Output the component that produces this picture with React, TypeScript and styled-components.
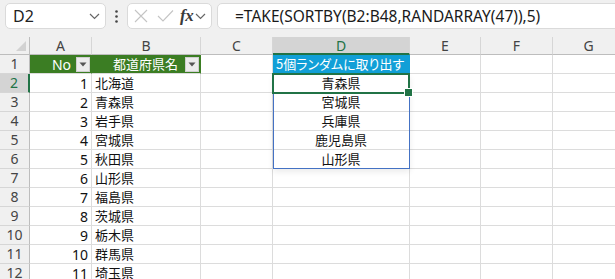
import React from 'react';
import styled, { createGlobalStyle, css } from 'styled-components';

const Global = createGlobalStyle`
  html, body { margin: 0; padding: 0; background: #ffffff; }
  body {
    width: 615px; height: 279px; overflow: hidden;
    font-family: "Segoe UI", "Noto Sans", "Noto Sans CJK JP", sans-serif;
  }
  * { box-sizing: border-box; }
`;

const GREEN = '#217346';
const GRID = '#dcdcdc';
const HEAD_BG = '#f0f0f0';
const HEAD_ACTIVE = '#d4d4d4';
const CJK = '"Noto Sans CJK JP", sans-serif';
const UI = '"Noto Sans", "Noto Sans CJK JP", sans-serif';

const Page = styled.div`
  width: 615px;
  height: 279px;
  overflow: hidden;
  display: flex;
  flex-direction: column;
  background: #fff;
`;

const Toolbar = styled.div`
  flex: none;
  height: 37px;
  background: ${HEAD_BG};
  display: flex;
  align-items: flex-start;
  padding: 3px 0 0 5px;
  overflow: hidden;
`;

const Box = styled.div<{ $w: number }>`
  flex: none;
  width: ${(p) => p.$w}px;
  height: 26px;
  background: #fff;
  border: 1px solid #dadada;
  border-radius: 5px;
  display: flex;
  align-items: center;
`;

const NameBox = styled(Box)`
  justify-content: space-between;
  padding: 0 5px 0 7px;
  font-family: ${UI};
  font-size: 16px;
  color: #222;
`;

const Dots = styled.div`
  flex: none;
  width: 21px;
  height: 26px;
  display: flex;
  align-items: center;
  justify-content: center;
`;

const FxBox = styled(Box)`
  padding: 0 2px 0 6px;
  gap: 0;
`;

const FxText = styled.span`
  font-family: "Liberation Serif", serif;
  font-style: italic;
  font-weight: bold;
  font-size: 17px;
  color: #3a3a3a;
  margin: 0 2px 0 6px;
  letter-spacing: -0.5px;
`;

const FormulaBox = styled(Box)`
  margin-left: 5px;
  padding-left: 17px;
  font-family: ${UI};
  font-size: 15.5px;
  color: #1a1a1a;
  white-space: nowrap;
`;

const Sheet = styled.div`
  display: grid;
  grid-template-columns: 30px 62px 109px 72px 137px 71px 72px 72px;
  grid-template-rows: 18px repeat(12, 19px);
  flex: none;
`;

type Pos = { $r: number; $c: number };

const Placed = styled.div<Pos>`
  grid-row: ${(p) => p.$r};
  grid-column: ${(p) => p.$c};
`;

const Corner = styled(Placed)`
  background: ${HEAD_BG};
  border-right: 1px solid #bdbdbd;
  border-bottom: 1px solid #bdbdbd;
  display: flex;
  align-items: flex-end;
  justify-content: flex-end;
  padding: 0 3px 3px 0;
`;

const ColHead = styled(Placed)<{ $active?: boolean }>`
  background: ${(p) => (p.$active ? HEAD_ACTIVE : HEAD_BG)};
  border-right: 1px solid #d6d6d6;
  border-bottom: ${(p) => (p.$active ? `2px solid ${GREEN}` : '1px solid #bdbdbd')};
  color: ${(p) => (p.$active ? GREEN : '#444')};
  font-family: ${UI};
  font-size: 14px;
  display: flex;
  align-items: center;
  justify-content: center;
  line-height: 1;
  padding-top: 1px;
`;

const RowHead = styled(Placed)<{ $active?: boolean }>`
  background: ${(p) => (p.$active ? HEAD_ACTIVE : HEAD_BG)};
  border-right: ${(p) => (p.$active ? `2px solid ${GREEN}` : '1px solid #bdbdbd')};
  border-bottom: 1px solid #d6d6d6;
  color: ${(p) => (p.$active ? GREEN : '#444')};
  font-family: ${UI};
  font-size: 14px;
  display: flex;
  align-items: center;
  justify-content: center;
  line-height: 1;
`;

type Variant = 'plain' | 'tableHead' | 'blueHead';

const Cell = styled(Placed)<{ $align?: 'left' | 'right' | 'center'; $variant?: Variant }>`
  border-right: 1px solid ${GRID};
  border-bottom: 1px solid ${GRID};
  font-family: ${UI};
  font-size: 14px;
  color: #111;
  display: flex;
  align-items: center;
  white-space: nowrap;
  overflow: hidden;
  line-height: 1;
  padding: 1px 3px 0 3px;
  justify-content: ${(p) =>
    p.$align === 'right' ? 'flex-end' : p.$align === 'center' ? 'center' : 'flex-start'};
  ${(p) =>
    p.$variant === 'tableHead' &&
    css`
      background: #3b7d23;
      border-right-color: #3b7d23;
      color: #fff;
      padding-right: 1px;
    `}
  ${(p) =>
    p.$variant === 'blueHead' &&
    css`
      background: #119fd7;
      border-right-color: #119fd7;
      color: #fff;
      font-feature-settings: "palt";
      padding-left: 3px;
    `}
`;

const Jp = styled.span`
  font-family: ${CJK};
  font-size: 13px;
  position: relative;
  top: -1px;
`;

const FilterBtn = styled.span<{ $gap?: number }>`
  flex: none;
  width: 14px;
  height: 15px;
  margin-left: ${(p) => p.$gap ?? 5}px;
  background: #ececec;
  border: 1px solid #cfcfcf;
  display: flex;
  align-items: center;
  justify-content: center;
`;

const Spill = styled(Placed)`
  grid-row: 3 / 8;
  border: 1px solid #4472c4;
  box-shadow: 0 3px 6px rgba(0, 0, 0, 0.08);
  pointer-events: none;
  z-index: 1;
`;

const Selection = styled(Placed)`
  margin: -1px 0 -1px -1px;
  border: 2px solid ${GREEN};
  position: relative;
  z-index: 2;
  pointer-events: none;

  &::after {
    content: '';
    position: absolute;
    right: -5px;
    bottom: -5px;
    width: 7px;
    height: 7px;
    background: ${GREEN};
    border: 1px solid #fff;
  }
`;

const cols = ['A', 'B', 'C', 'D', 'E', 'F', 'G'];
const prefs = ['北海道', '青森県', '岩手県', '宮城県', '秋田県', '山形県', '福島県', '茨城県', '栃木県', '群馬県', '埼玉県'];
const picks = ['青森県', '宮城県', '兵庫県', '鹿児島県', '山形県'];

const Chevron = () => (
  <svg width="11" height="7" viewBox="0 0 11 7">
    <path d="M1 1 L5.5 5.5 L10 1" fill="none" stroke="#666" strokeWidth="1.2" />
  </svg>
);

const FilterArrow = () => (
  <svg width="8" height="5" viewBox="0 0 8 5">
    <path d="M0.5 0.5 H7.5 L4 4.5 Z" fill="#555" />
  </svg>
);

export default function App() {
  const rows = Array.from({ length: 12 }, (_, i) => i + 1);
  return (
    <>
      <Global />
      <Page>
        <Toolbar>
          <NameBox $w={101}>
            <span>D2</span>
            <Chevron />
          </NameBox>
          <Dots>
            <svg width="3" height="13" viewBox="0 0 3 13">
              <circle cx="1.5" cy="1.5" r="1.3" fill="#444" />
              <circle cx="1.5" cy="6.5" r="1.3" fill="#444" />
              <circle cx="1.5" cy="11.5" r="1.3" fill="#444" />
            </svg>
          </Dots>
          <FxBox $w={85}>
            <svg width="14" height="14" viewBox="0 0 14 14">
              <path d="M1 1 L13 13 M13 1 L1 13" stroke="#c4c4c4" strokeWidth="1.1" fill="none" />
            </svg>
            <svg width="17" height="14" viewBox="0 0 17 14" style={{ marginLeft: 9 }}>
              <path d="M1 7 L6 12 L16 1.5" stroke="#c4c4c4" strokeWidth="1.1" fill="none" />
            </svg>
            <FxText>fx</FxText>
            <Chevron />
          </FxBox>
          <FormulaBox $w={420}>=TAKE(SORTBY(B2:B48,RANDARRAY(47)),5)</FormulaBox>
        </Toolbar>
        <Sheet>
          <Corner $r={1} $c={1}>
            <svg width="10" height="10" viewBox="0 0 10 10">
              <path d="M10 0 V10 H0 Z" fill="#d2d2d2" />
            </svg>
          </Corner>
          {cols.map((c, i) => (
            <ColHead key={c} $r={1} $c={i + 2} $active={c === 'D'}>
              {c}
            </ColHead>
          ))}
          {rows.map((n) => (
            <React.Fragment key={n}>
              <RowHead $r={n + 1} $c={1} $active={n === 2}>
                {n}
              </RowHead>
              {cols.map((c, i) => {
                const key = `${c}${n}`;
                const pos = { $r: n + 1, $c: i + 2 };
                if (n === 1 && c === 'A')
                  return (
                    <Cell key={key} {...pos} $align="right" $variant="tableHead">
                      No
                      <FilterBtn>
                        <FilterArrow />
                      </FilterBtn>
                    </Cell>
                  );
                if (n === 1 && c === 'B')
                  return (
                    <Cell key={key} {...pos} $align="right" $variant="tableHead">
                      <Jp>都道府県名</Jp>
                      <FilterBtn $gap={7}>
                        <FilterArrow />
                      </FilterBtn>
                    </Cell>
                  );
                if (n === 1 && c === 'D')
                  return (
                    <Cell key={key} {...pos} $variant="blueHead">
                      <Jp>5個ランダムに取り出す</Jp>
                    </Cell>
                  );
                if (n >= 2 && c === 'A')
                  return (
                    <Cell key={key} {...pos} $align="right">
                      {n - 1}
                    </Cell>
                  );
                if (n >= 2 && c === 'B')
                  return (
                    <Cell key={key} {...pos}>
                      <Jp>{prefs[n - 2]}</Jp>
                    </Cell>
                  );
                if (n >= 2 && n <= 6 && c === 'D')
                  return (
                    <Cell key={key} {...pos} $align="center">
                      <Jp>{picks[n - 2]}</Jp>
                    </Cell>
                  );
                return <Cell key={key} {...pos} />;
              })}
            </React.Fragment>
          ))}
          <Spill $r={3} $c={5} />
          <Selection $r={3} $c={5} />
        </Sheet>
      </Page>
    </>
  );
}
